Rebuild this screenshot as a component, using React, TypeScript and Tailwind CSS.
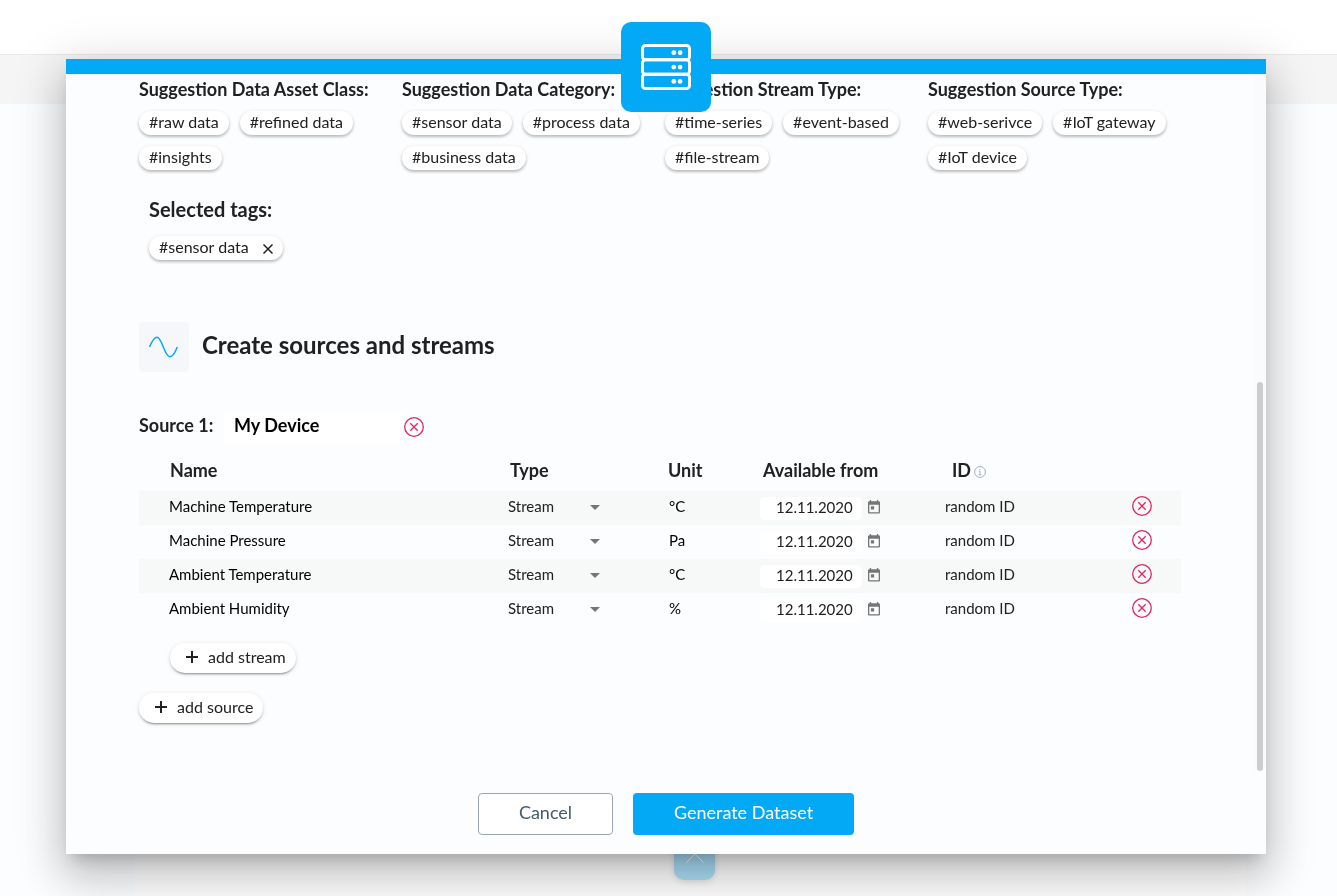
import React from "react";

const groups = [
  { title: "Suggestion Data Asset Class:", tags: ["#raw data", "#refined data", "#insights"] },
  { title: "Suggestion Data Category:", tags: ["#sensor data", "#process data", "#business data"] },
  { title: "Suggestion Stream Type:", tags: ["#time-series", "#event-based", "#file-stream"] },
  { title: "Suggestion Source Type:", tags: ["#web-serivce", "#IoT gateway", "#IoT device"] },
];

const streams = [
  { name: "Machine Temperature", unit: "°C" },
  { name: "Machine Pressure", unit: "Pa" },
  { name: "Ambient Temperature", unit: "°C" },
  { name: "Ambient Humidity", unit: "%" },
];

const chip =
  "flex h-6 items-center rounded-full bg-white px-2.5 pb-0.5 text-base leading-[22px] shadow-[0_1px_4px_0_rgba(0,0,0,0.12),0_2px_3px_0_rgba(0,0,0,0.2)]";
const addButton =
  "flex h-[30px] items-center gap-2.5 rounded-full bg-white pr-2.5 pb-0.5 pl-4 text-base shadow-[0_3px_1px_-2px_rgba(0,0,0,0.2),0_2px_2px_0_rgba(0,0,0,0.14),0_1px_5px_0_rgba(0,0,0,0.12)]";

function DeleteIcon() {
  return (
    <svg width="20" height="20" viewBox="0 0 20 20" fill="none" stroke="#e02562" strokeWidth="1.3" className="block shrink-0">
      <circle cx="10" cy="10" r="9.3" />
      <path d="M6.3 6.3l7.4 7.4M13.7 6.3l-7.4 7.4" />
    </svg>
  );
}

function CalendarIcon() {
  return (
    <svg width="12" height="14" viewBox="0 0 12 14" className="mb-0.5 block shrink-0">
      <path
        fill="#757575"
        fillRule="evenodd"
        d="M1.8 0h1.3v1.2h5.8V0h1.3v1.2h.5C11.4 1.2 12 1.8 12 2.500v9.700c0 .7-.6 1.300-1.300 1.300H1.300C.6 13.500 0 12.900 0 12.200V2.500c0-.7.6-1.300 1.300-1.300h.5zM1.300 4.700v7.500h9.400V4.700zM2.900 6.200h3.200v3.200H2.900z"
      />
    </svg>
  );
}

function ServerIcon() {
  return (
    <svg width="50" height="46" viewBox="0 0 50 46" fill="none" stroke="#fff" strokeWidth="3" className="block">
      {[1.5, 15.850, 30.200].map((y) => (
        <g key={y}>
          <rect x="1.500" y={y} width="47" height="14.300" rx="3" />
          <circle cx="32.800" cy={y + 7.200} r="2.400" fill="#fff" stroke="none" />
          <circle cx="39.100" cy={y + 7.200} r="2.400" fill="#fff" stroke="none" />
        </g>
      ))}
    </svg>
  );
}

function PlusIcon() {
  return (
    <svg width="12" height="12" viewBox="0 0 12 12" stroke="#212121" strokeWidth="2" className="block">
      <path d="M6 0v12M0 6h12" />
    </svg>
  );
}

function Backdrop() {
  return (
    <div className="absolute inset-0 flex flex-col bg-[#fcfdff]">
      <div className="h-[55px] shrink-0 border-b border-[#e8e8e8] bg-white" />
      <div className="h-[49px] shrink-0 bg-[#f5f5f5]" />
      <div className="ml-[135px] w-[1110px] grow bg-white pt-[736px]">
        <div className="ml-[539px] flex h-10 w-[41px] justify-center rounded-[10px] bg-[#abdff7] pt-[13px] shadow-[0_2px_6px_rgba(0,0,0,0.12)]">
          <svg width="18" height="10" viewBox="0 0 18 10" fill="none" stroke="#fff" strokeWidth="1">
            <path d="M.5 9.500L9 1l8.500 8.500" />
          </svg>
        </div>
      </div>
    </div>
  );
}

export default function App() {
  return (
    <div className="relative h-[896px] w-[1337px] overflow-hidden bg-[#fcfdff] font-[Lato,sans-serif] text-[#212121]">
      <Backdrop />
      <div className="relative mt-[59px] ml-[66px] flex h-[795px] w-[1200px] flex-col border-t-[15px] border-[#03a9f4] bg-[#fcfdff] shadow-[0_11px_15px_-7px_rgba(0,0,0,0.2),0_24px_38px_3px_rgba(0,0,0,0.14),0_9px_46px_8px_rgba(0,0,0,0.12)]">
        <div className="flex h-[697px] shrink-0 justify-between pl-[73px] will-change-transform">
          <div className="w-[1052px]">
            <div className="grid grid-cols-4">
              {groups.map((g) => (
                <section key={g.title}>
                  <h3 className="mt-[3px] h-6 text-lg leading-6 font-bold whitespace-nowrap">{g.title}</h3>
                  <div className="mt-2.5 flex flex-wrap gap-[11px]">
                    {g.tags.map((t) => (
                      <span key={t} className={chip}>{t}</span>
                    ))}
                  </div>
                </section>
              ))}
            </div>
            <div className="mt-[25px] ml-2.5">
              <h3 className="h-7 text-xl leading-7 font-bold">Selected tags:</h3>
              <div className="mt-[13px] flex">
                <span className={chip}>
                  #sensor data
                  <svg width="10" height="10" viewBox="0 0 10 10" stroke="#212121" strokeWidth="1.500" className="mt-[3px] ml-3.5">
                    <path d="M.5.5l9 9M9.500.5l-9 9" />
                  </svg>
                </span>
              </div>
            </div>
            <div className="mt-[62px] flex h-[50px] gap-[13px]">
              <span className="flex size-[50px] items-center justify-center rounded bg-[#f5f7fb]">
                <svg width="30" height="22" viewBox="0 0 30 22" fill="none" stroke="#03a9f4" strokeWidth="1.500">
                  <path d="M.5 11C3.500 4 5.500 1.300 8 1.300c5 0 7.500 19.400 13 19.400 2.500 0 4.500-2.700 7.300-9.700" />
                </svg>
              </span>
              <h2 className="text-2xl leading-[45px] font-bold">Create sources and streams</h2>
            </div>
            <div className="mt-[39px] flex h-[33px] items-center">
              <span className="w-[85px] pb-1.5 text-lg leading-6 font-bold">Source 1:</span>
              <span className="h-[33px] w-[180px] bg-white pl-2.5 text-lg leading-[29px] font-bold text-black">My Device</span>
              <span className="pb-[1px]"><DeleteIcon /></span>
            </div>
            <div className="w-[1042px]">
              <div className="grid h-[47px] grid-cols-[31px_340px_158px_95px_189px_auto] text-lg leading-[53px] font-bold">
                <span />
                <span>Name</span>
                <span>Type</span>
                <span>Unit</span>
                <span>Available from</span>
                <span className="flex items-center gap-[3px]">
                  ID
                  <svg width="12" height="12" viewBox="0 0 12 12" fill="none" stroke="#a4b0bb" strokeWidth="1" className="mt-[3px]">
                    <circle cx="6" cy="6" r="5.400" />
                    <path d="M6 3v1.200M4.900 5.300H6V8.500M4.700 8.700h2.600" />
                  </svg>
                </span>
              </div>
              {streams.map((s) => (
                <div key={s.name} className="grid h-[34px] grid-cols-[30px_339px_161px_91px_185px_187px_20px] text-[15px] leading-[30px] even:bg-[#f7f9f8]">
                  <span />
                  <span className="text-black">{s.name}</span>
                  <span className="flex items-start">
                    <span className="w-[82px]">Stream</span>
                    <svg width="10" height="5" viewBox="0 0 10 5" fill="#757575" className="mt-3.5">
                      <path d="M0 0h10L5 5z" />
                    </svg>
                  </span>
                  <span className="text-black">{s.unit}</span>
                  <span className="flex items-center gap-1.5">
                    <span className="h-[23px] w-[102px] rounded-[5px] bg-white pl-4 leading-5">12.11.2020</span>
                    <CalendarIcon />
                  </span>
                  <span>random ID</span>
                  <span className="pt-[5px]"><DeleteIcon /></span>
                </div>
              ))}
            </div>
            <div className="mt-4 flex flex-col items-start gap-5">
              <div className="pl-[31px]">
                <button className={addButton}><PlusIcon />add stream</button>
              </div>
              <button className={addButton}><PlusIcon />add source</button>
            </div>
          </div>
          <div className="w-3 bg-[#fafbfc] px-[3px] pt-[308px]">
            <div className="h-[389px] rounded-full bg-[#cdcdcd]" />
          </div>
        </div>
        <div className="mt-[22px] ml-[412px] flex h-[42px] gap-5 text-lg will-change-transform">
          <button className="flex w-[135px] justify-center rounded border border-[#9aa7b2] bg-white leading-9 text-[#455a6b]">Cancel</button>
          <button className="flex w-[221px] justify-center rounded bg-[#03a9f4] leading-[38px] text-white">Generate Dataset</button>
        </div>
      </div>
      <div className="absolute top-[22px] left-[621px] flex size-[90px] items-center justify-center rounded-[10px] bg-[#03a9f4]">
        <ServerIcon />
      </div>
    </div>
  );
}
